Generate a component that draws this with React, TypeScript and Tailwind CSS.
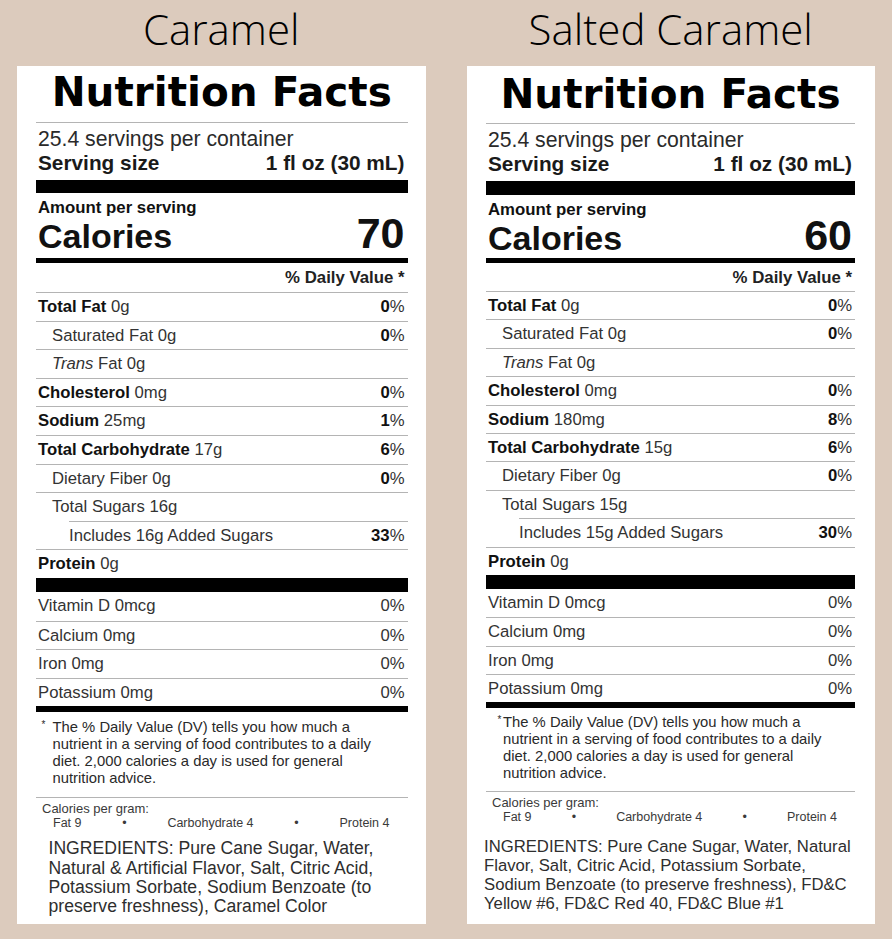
import React from 'react';

interface Nutrient {
  label: string;
  italic?: string;
  amount: string;
  dv?: string;
  bold?: boolean;
  indent?: 0 | 1 | 2;
}

interface Layout {
  card: string;
  nf: string;
  topBar: string;
  calories: string;
  dv: string;
  row: string;
  footnote: string;
  asterisk: string;
  ingredients: string;
}

interface LabelData {
  flavor: string;
  calories: string;
  nutrients: Nutrient[];
  ingredients: string[];
  layout: Layout;
}

const vitamins = [
  { label: 'Vitamin D 0mcg', dv: '0%' },
  { label: 'Calcium 0mg', dv: '0%' },
  { label: 'Iron 0mg', dv: '0%' },
  { label: 'Potassium 0mg', dv: '0%' },
];

const footnote = [
  'The % Daily Value (DV) tells you how much a',
  'nutrient in a serving of food contributes to a daily',
  'diet. 2,000 calories a day is used for general',
  'nutrition advice.',
];

function buildNutrients(sodium: string, sodiumDv: string, carb: string, sugars: string, addedDv: string): Nutrient[] {
  return [
    { label: 'Total Fat', amount: '0g', dv: '0', bold: true },
    { label: 'Saturated Fat', amount: '0g', dv: '0', indent: 1 },
    { label: 'Fat', italic: 'Trans', amount: '0g', indent: 1 },
    { label: 'Cholesterol', amount: '0mg', dv: '0', bold: true },
    { label: 'Sodium', amount: sodium, dv: sodiumDv, bold: true },
    { label: 'Total Carbohydrate', amount: carb, dv: '6', bold: true },
    { label: 'Dietary Fiber', amount: '0g', dv: '0', indent: 1 },
    { label: 'Total Sugars', amount: sugars, indent: 1 },
    { label: `Includes ${sugars} Added Sugars`, amount: '', dv: addedDv, indent: 2 },
    { label: 'Protein', amount: '0g', bold: true },
  ];
}

const labels: LabelData[] = [
  {
    flavor: 'Caramel',
    calories: '70',
    nutrients: buildNutrients('25mg', '1', '17g', '16g', '33'),
    ingredients: [
      'INGREDIENTS: Pure Cane Sugar, Water,',
      'Natural & Artificial Flavor, Salt, Citric Acid,',
      'Potassium Sorbate, Sodium Benzoate (to',
      'preserve freshness), Caramel Color',
    ],
    layout: {
      card: 'pl-[19px] pr-[18px]',
      nf: 'h-[56px] pt-[3px]',
      topBar: 'h-[13px]',
      calories: 'h-[40px]',
      dv: 'h-[29px] leading-[29px]',
      row: 'h-[28.6px] leading-[27.6px]',
      footnote: 'mt-[7px] mb-[10px]',
      asterisk: 'w-[16.5px] pl-[5.5px]',
      ingredients: 'mt-[8px] ml-[12.5px] text-[17.6px] leading-[19.3px]',
    },
  },
  {
    flavor: 'Salted Caramel',
    calories: '60',
    nutrients: buildNutrients('180mg', '8', '15g', '15g', '30'),
    ingredients: [
      'INGREDIENTS: Pure Cane Sugar, Water, Natural',
      'Flavor, Salt, Citric Acid, Potassium Sorbate,',
      'Sodium Benzoate (to preserve freshness), FD&C',
      'Yellow #6, FD&C Red 40, FD&C Blue #1',
    ],
    layout: {
      card: 'pl-[19.5px] pr-[20px]',
      nf: 'h-[57px] pt-[5px]',
      topBar: 'h-[14px]',
      calories: 'h-[38px]',
      dv: 'h-[28px] leading-[30px]',
      row: 'h-[28.4px] leading-[27.4px]',
      footnote: 'mt-[6px] mb-[9px]',
      asterisk: 'w-[17px] pl-[11.5px]',
      ingredients: 'mt-[11.5px] -ml-[2px] text-[16.7px] leading-[19.1px]',
    },
  },
];

function NutrientRow({ n, rowClass }: { n: Nutrient; rowClass: string }) {
  const indent = n.indent === 1 ? 'pl-[16px]' : n.indent === 2 ? 'ml-[33px]' : 'pl-[2px]';
  return (
    <div className={`flex justify-between border-t border-[#b4b4b4] pr-[3px] text-[16.7px] ${rowClass} ${indent}`}>
      <span className="text-[#333]">
        {n.italic && <i>{n.italic} </i>}
        {n.bold ? <span className="font-bold text-[#111]">{n.label}</span> : n.label}
        {n.amount && ` ${n.amount}`}
      </span>
      {n.dv && (
        <span className="text-[#333]">
          <span className="font-bold text-[#111]">{n.dv}</span>%
        </span>
      )}
    </div>
  );
}

function Label({ data }: { data: LabelData }) {
  const l = data.layout;
  return (
    <div className="flex flex-1 flex-col">
      <div className="h-[66px] text-center font-['Open_Sans',sans-serif] text-[42px] font-light leading-[57px] text-black">
        {data.flavor}
      </div>
      <div className={`h-[858px] bg-white ${l.card}`}>
        {/* Heading */}
        <div className={`text-center font-['DejaVu_Sans',sans-serif] text-[40.5px] font-bold leading-[47px] text-black ${l.nf}`}>
          Nutrition Facts
        </div>
        <div className="border-t border-[#b4b4b4] pt-[4px] leading-[24px] text-[#1a1a1a]">
          <div className="pl-[2px] text-[21.2px] text-[#2a2a2a]">25.4 servings per container</div>
          <div className="flex justify-between pl-[2px] pr-[3px] text-[20.8px] font-bold">
            <span>Serving size</span>
            <span>1 fl oz (30 mL)</span>
          </div>
        </div>
        <div className={`mt-[5px] bg-black ${l.topBar}`} />

        {/* Calories */}
        <div className="pl-[2px] pt-[5px] text-[16.8px] font-bold leading-[20px] text-[#111]">Amount per serving</div>
        <div className={`flex items-baseline justify-between pl-[2px] pr-[3px] font-bold leading-[30px] text-[#111] ${l.calories}`}>
          <span className="text-[34px]">Calories</span>
          <span className="text-[43px]">{data.calories}</span>
        </div>
        <div className="h-[5px] bg-black" />
        <div className={`pr-[3px] text-right text-[16.8px] font-bold text-[#222] ${l.dv}`}>% Daily Value *</div>

        {/* Nutrients */}
        {data.nutrients.map((n) => (
          <NutrientRow key={n.label} n={n} rowClass={l.row} />
        ))}
        <div className="h-[14px] bg-black" />
        {vitamins.map((v, i) => (
          <div
            key={v.label}
            className={`flex justify-between pl-[2px] pr-[3px] text-[16.7px] text-[#333] ${l.row} ${i > 0 ? 'border-t border-[#b4b4b4]' : ''}`}
          >
            <span>{v.label}</span>
            <span>{v.dv}</span>
          </div>
        ))}
        <div className="h-[6px] bg-black" />

        {/* Footnote */}
        <div className={`flex text-[14.8px] leading-[17px] text-[#2a2a2a] ${l.footnote}`}>
          <span className={`shrink-0 text-[10px] leading-[12px] ${l.asterisk}`}>*</span>
          <div>
            {footnote.map((line) => (
              <div key={line}>{line}</div>
            ))}
          </div>
        </div>
        <div className="border-t border-[#b4b4b4] pt-[3px] text-[#3a3a3a]">
          <div className="ml-[6px] text-[13px] leading-[15px]">Calories per gram:</div>
          <div className="ml-[17px] mr-[18px] flex justify-between text-[12.5px] leading-[15px]">
            <span>Fat 9</span>
            <span>•</span>
            <span>Carbohydrate 4</span>
            <span>•</span>
            <span>Protein 4</span>
          </div>
        </div>

        {/* Ingredients */}
        <div className={`text-[#2e2e2e] ${l.ingredients}`}>
          {data.ingredients.map((line) => (
            <div key={line} className="whitespace-nowrap">{line}</div>
          ))}
        </div>
      </div>
    </div>
  );
}

export default function App() {
  return (
    <div className="flex min-h-[939px] w-[892px] gap-[41px] bg-[#dccbbd] px-[17px] font-['Liberation_Sans',Arial,sans-serif]">
      {labels.map((d) => (
        <Label key={d.flavor} data={d} />
      ))}
    </div>
  );
}
